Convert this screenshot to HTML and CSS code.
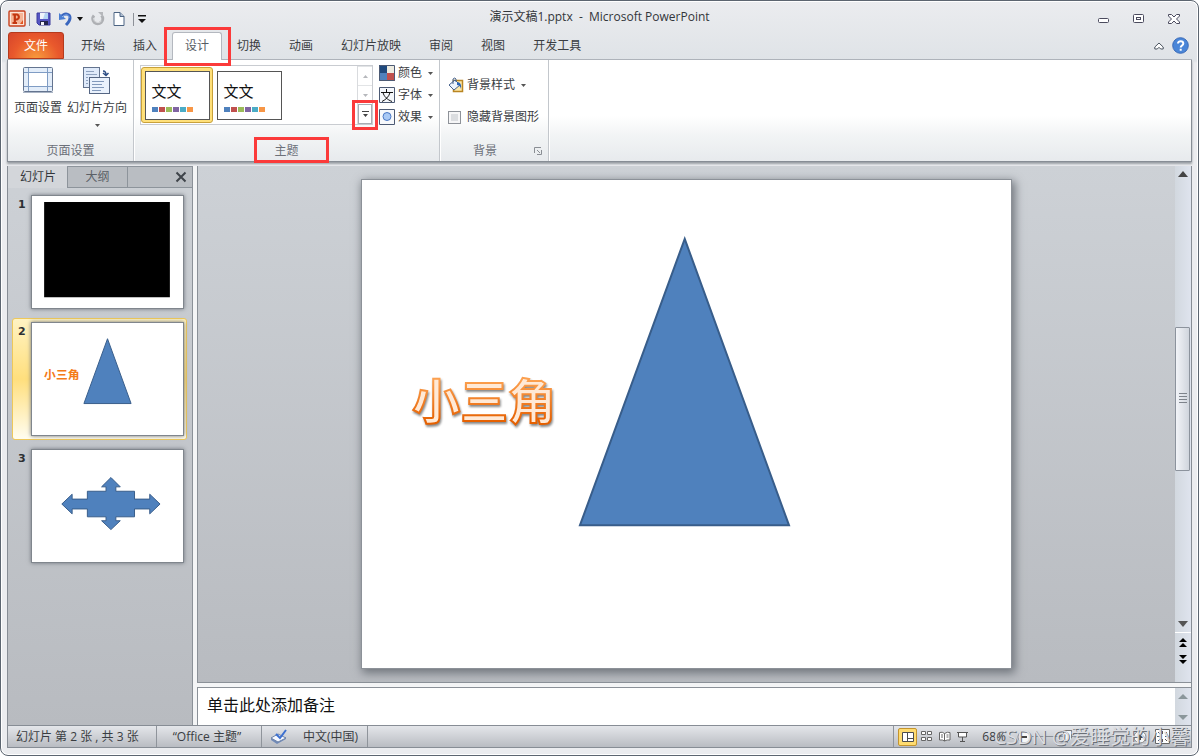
FILE: index.html
```html
<!DOCTYPE html>
<html lang="zh-CN">
<head>
<meta charset="utf-8">
<title>演示文稿1.pptx - Microsoft PowerPoint</title>
<link rel="stylesheet" href="styles.css">
</head>
<body>
<div class="window">
  <header class="titlebar">
    <div class="quick">
      <button class="ic" aria-label="PowerPoint"><svg width="18" height="18" viewBox="0 0 18 18"><rect x="1" y="1" width="16" height="15" rx="1" fill="#fbe3d6" stroke="#c8401c" stroke-width="1.4"/><path d="M3 3h12v11H3z" fill="#f6b596"/><path d="M6.800 4v9M4.500 13h4.500M4.500 4.500h4.500a2.600 2.600 0 0 1 0 5H7" fill="none" stroke="#c3360f" stroke-width="2.200"/><path d="M12 14l3-4v4z" fill="#e2551f"/></svg></button>
      <span class="sep"></span>
      <button class="ic save" aria-label="保存"><svg width="16" height="16" viewBox="0 0 16 16"><path d="M1 2h13v12H3l-2-2z" fill="#5656c4" stroke="#3a3a9c"/><path d="M4 2h8v6H4z" fill="#f0f4fc"/><path d="M9 2h3v6H7z" fill="#b5d4f2"/><path d="M4 10h8v4H4z" fill="#25264d"/><path d="M5 11h3v3H5z" fill="#f3f3f8"/></svg></button>
      <button class="ic undo" aria-label="撤消"><svg width="16" height="16" viewBox="0 0 16 16"><path d="M3 6c4-5 9-3 9 1 0 3-2 5-4 7" fill="none" stroke="#3a66be" stroke-width="3"/><path d="M1 2v7l7-1z" fill="#4b7ed2"/><path d="M4 6c3-3 7-3 7 1" fill="none" stroke="#91b8ef"/></svg></button>
      <button class="ic caret" aria-label="撤消选项"><svg width="6" height="4"><path d="M0 0h6L3 4z" fill="#111"/></svg></button>
      <button class="ic redo" aria-label="重复"><svg width="16" height="16" viewBox="0 0 16 16"><path d="M4 4.500a5 5 0 1 0 7.500 0" fill="none" stroke="#aeb0b4" stroke-width="3"/><path d="M8 1h5v5z" fill="#b5b7bb"/><path d="M3.500 7a4.500 4.500 0 0 0 8 3" fill="none" stroke="#d8d9dc"/></svg></button>
      <button class="ic new" aria-label="新建"><svg width="14" height="16" viewBox="0 0 14 16"><path d="M2 1.500h6l4 4v9H2z" fill="#fdfeff" stroke="#4c6483"/><path d="M8 1.500v4h4" fill="#aebed2" stroke="#4c6483"/></svg></button>
      <span class="sep"></span>
      <button class="ic" aria-label="自定义快速访问工具栏"><svg width="8" height="8"><path d="M0 0h8v1.500H0zM0 4h8L4 8z" fill="#111"/></svg></button>
    </div>
    <h1 class="title">演示文稿1.pptx&nbsp; -&nbsp; Microsoft PowerPoint</h1>
    <div class="winbtns">
      <button class="ic" aria-label="最小化"><svg width="12" height="12"><rect x="0.500" y="5.500" width="10" height="4" rx="1" fill="#fff" stroke="#4b4b5e"/></svg></button>
      <button class="ic" aria-label="还原"><svg width="12" height="12"><rect x="0.500" y="1.500" width="10" height="8" rx="1" fill="#fff" stroke="#4b4b5e"/><rect x="3.500" y="4.500" width="4" height="2" fill="#fff" stroke="#4b4b5e"/></svg></button>
      <button class="ic" aria-label="关闭"><svg width="12" height="12"><path d="M.5 1.500h3L6 4l2.500-2.500h3v1.500L8.500 6l3 3v1.500h-3L6 8l-2.500 2.500h-3V9l3-3-3-3z" fill="#fff" stroke="#4b4b5e"/></svg></button>
    </div>
  </header>

  <nav class="tabs">
    <button class="file">文件</button>
    <button class="tab">开始</button>
    <button class="tab">插入</button>
    <button class="tab active">设计<span class="mark mark-tab"></span></button>
    <button class="tab">切换</button>
    <button class="tab">动画</button>
    <button class="tab">幻灯片放映</button>
    <button class="tab">审阅</button>
    <button class="tab">视图</button>
    <button class="tab">开发工具</button>
    <div class="help">
      <button class="ic" aria-label="功能区最小化"><svg width="10" height="8"><path d="M5 1L.8 5v2h2.500L5 5.300 6.700 7h2.500V5z" fill="#fff" stroke="#4b5560"/></svg></button>
      <button class="ic" aria-label="帮助"><svg width="17" height="17"><circle cx="8.500" cy="8.500" r="7.800" fill="#4a86d8" stroke="#3a6bb8"/><path d="M6 6.500c0-3.200 5.300-3 5.300 0 0 2-2.600 2-2.600 4M8.700 11.800v2" fill="none" stroke="#fff" stroke-width="2"/></svg></button>
    </div>
  </nav>

  <section class="ribbon">
    <div class="group">
      <div class="tools">
        <button class="big"><svg width="32" height="32" viewBox="0 0 32 32"><rect x="1.500" y="3.500" width="29" height="24" rx="1" fill="#e3edf9" stroke="#64748f"/><path d="M7 9h18v13H7z" fill="#fff"/><path d="M2 8.500h28M2 22.500h28M6.500 4v23M25.500 4v23" stroke="#7f9cc4" fill="none"/><path d="M1 28.500h30" stroke="#a9b4c5"/></svg>页面设置</button>
        <button class="big"><svg width="32" height="32" viewBox="0 0 32 32"><rect x="2.500" y="3.500" width="16" height="20" fill="#dfeafa" stroke="#64748f"/><path d="M5 7.500h8M5 10.500h11M5 13.500h2M5 16.500h2M5 19.500h2" stroke="#8fa2bf"/><rect x="8.500" y="13.500" width="20" height="16" fill="#eaf2fd" stroke="#556683"/><path d="M11 17.500h12M11 20.500h10M11 23.500h12M11 26.500h9" stroke="#8299bb"/><path d="M22 7q3 0 3 4M22 9l3 2.500L27.500 9" fill="none" stroke="#2f4f85" stroke-width="1.500"/></svg>幻灯片方向<svg class="below" width="5" height="3"><path d="M0 0h5L2.500 3z" fill="#555"/></svg></button>
      </div>
      <div class="label">页面设置</div>
    </div>
    <div class="group">
      <div class="tools themes">
        <div class="gallery">
          <button class="theme chosen"><span class="sample"><span class="glyphs">文文</span><span class="swatches"><i class="c1"></i><i class="c2"></i><i class="c3"></i><i class="c4"></i><i class="c5"></i><i class="c6"></i></span></span></button>
          <button class="theme"><span class="sample"><span class="glyphs">文文</span><span class="swatches"><i class="c1"></i><i class="c2"></i><i class="c3"></i><i class="c4"></i><i class="c5"></i><i class="c6"></i></span></span></button>
          <div class="pager">
            <button aria-label="上一行"><svg width="5" height="3"><path d="M0 3h5L2.500 0z" fill="#b6b8bc"/></svg></button>
            <button aria-label="下一行"><svg width="5" height="3"><path d="M0 0h5L2.500 3z" fill="#b6b8bc"/></svg></button>
            <button class="more" aria-label="其他"><svg width="7" height="7"><path d="M0 0h7v1H0zM1 3h5L3.500 6z" fill="#444"/></svg><span class="mark mark-more"></span></button>
          </div>
        </div>
        <div class="rows">
          <button class="row"><svg width="16" height="16"><path d="M0 0h8v8H0z" fill="#1f497d"/><path d="M8 0h8v8H8z" fill="#eeece1"/><path d="M0 8h8v8H0z" fill="#4f81bd"/><path d="M8 8h8v8H8z" fill="#c0504d"/><path d="M.5.5h15v15H.5z" fill="none" stroke="#4c5a74"/></svg>颜色<svg class="arrow" width="5" height="3"><path d="M0 0h5L2.500 3z" fill="#555"/></svg></button>
          <button class="row"><svg width="16" height="16"><path d="M.5.5h15v15H.5z" fill="#f4f7fc" stroke="#4c5a74"/><path d="M7.500 2v3M2 5.500h12M11 5.500c-1 4-4 7-8 9M4 5.500c1 4 4 7 9 9" fill="none" stroke="#111"/></svg>字体<svg class="arrow" width="5" height="3"><path d="M0 0h5L2.500 3z" fill="#555"/></svg></button>
          <button class="row"><svg width="16" height="16"><path d="M.5.5h15v15H.5z" fill="#f7f9fc" stroke="#4c5a74"/><circle cx="8" cy="7.500" r="4" fill="#a9c9f5" stroke="#4a78c4"/></svg>效果<svg class="arrow" width="5" height="3"><path d="M0 0h5L2.500 3z" fill="#555"/></svg></button>
        </div>
      </div>
      <div class="label">主题<span class="mark mark-label"></span></div>
    </div>
    <div class="group">
      <div class="tools backs">
        <button class="row"><svg width="16" height="16" viewBox="0 0 16 16"><path d="M5.500 3.500h9v11h-9z" fill="#ffe9a8" stroke="#b98521" stroke-width="1.500"/><path d="M1 8l6-5 5 5-6 5z" fill="#eef4fc" stroke="#47628c"/><path d="M5 7V2q2-2 3 0v3" fill="none" stroke="#47628c"/><path d="M9 5q5 0 4 7-1-4-4-4z" fill="#2c65b4"/></svg>背景样式<svg class="arrow" width="5" height="3"><path d="M0 0h5L2.500 3z" fill="#555"/></svg></button>
        <label class="row check"><input type="checkbox">隐藏背景图形</label>
      </div>
      <div class="label">背景<button class="launch" aria-label="背景对话框"><svg width="8" height="8"><path d="M.5 6V.5H7M3 3l3 3M7.500 3v4.500H3" fill="none" stroke="#8a8e94"/></svg></button></div>
    </div>
  </section>

  <main class="work">
    <aside class="side">
      <div class="sidetabs"><button class="on">幻灯片</button><button>大纲</button><button class="close" aria-label="关闭窗格"><svg width="12" height="12"><path d="M1.500 1.500l9 9M10.500 1.500l-9 9" stroke="#3f444a" stroke-width="2"/></svg></button></div>
      <ol class="thumbs">
        <li><b>1</b><div class="thumb"><svg viewBox="0 0 151 114"><path d="M11 6h128v97H11z"/></svg></div></li>
        <li class="picked"><b>2</b><div class="thumb"><svg viewBox="0 0 151 114"><path d="M75.500 16L99.500 82h-48z" fill="#4f81bd" stroke="#385d8a"/><text x="11" y="57" class="mini">小三角</text></svg></div></li>
        <li><b>3</b><div class="thumb"><svg viewBox="0 0 151 114"><path d="M79 28l9.500 9.500h-4.500V42h19v8h15.500v-5L129 55l-10.500 10v-5H103v8H84v4h4.500L79 81l-9.500-9H74v-4H55v-8H39.500v5L29 55l10.500-10v5H55v-8h19v-4.500h-4.500z" fill="#4f81bd" stroke="#385d8a"/></svg></div></li>
      </ol>
    </aside>
    <section class="editor">
      <div class="stage">
        <div class="canvas">
          <svg class="slide" viewBox="0 0 650 488">
            <defs><linearGradient id="orange" x1="0" y1="0" x2="0" y2="1"><stop offset="0.250" stop-color="#fca04f"/><stop offset="0.850" stop-color="#e66000"/></linearGradient></defs>
            <path d="M323 59L427.500 346H218z" fill="#4f81bd" stroke="#385d8a" stroke-width="2"/>
            <text x="50" y="239" class="wordart" stroke="url(#orange)">小三角</text>
          </svg>
        </div>
        <div class="scroll">
          <button aria-label="向上"><svg width="10" height="6"><path d="M0 6h10L5 0z" fill="#444"/></svg></button>
          <div class="track"><div class="grip"><svg width="8" height="11"><path d="M0 .5h8M0 3.500h8M0 6.500h8M0 9.500h8" stroke="#7d838b"/></svg></div></div>
          <button aria-label="向下"><svg width="10" height="6"><path d="M0 0h10L5 6z" fill="#555"/></svg></button>
          <div class="pages">
            <button aria-label="上一张"><svg width="8" height="10"><path d="M0 4h8L4 0zM0 9h8L4 5z"/></svg></button>
            <button aria-label="下一张"><svg width="8" height="10"><path d="M0 1h8L4 5zM0 6h8l-4 4z"/></svg></button>
          </div>
        </div>
      </div>
      <div class="notes">
        <textarea aria-label="备注" placeholder="单击此处添加备注"></textarea>
        <div class="scroll">
          <button aria-label="备注向上"><svg width="10" height="5"><path d="M0 5h10L5 0z" fill="#8b979b"/></svg></button>
          <button aria-label="备注向下"><svg width="10" height="5"><path d="M0 0h10L5 5z" fill="#8b979b"/></svg></button>
        </div>
      </div>
    </section>
  </main>

  <footer class="status">
    <span class="cell">幻灯片 第 2 张 , 共 3 张</span>
    <span class="cell wide">“Office 主题”</span>
    <span class="cell lang"><svg width="18" height="16" viewBox="0 0 18 16"><path d="M1 9v2l6 4 9-5V8z" fill="#718ab8"/><path d="M1 9l7-4 8 4-8 4z" fill="#f5f8ff" stroke="#6d83a8"/><path d="M6 5l4 4 6-8" fill="none" stroke="#3b6fd0" stroke-width="2"/></svg>中文(中国)</span>
    <div class="right">
      <div class="views">
        <button class="current" aria-label="普通视图"><svg width="12" height="10"><path d="M.5.5h11v9H.5zM5.500 0v10M5.500 6.500h6" fill="#fff" stroke="#4c4c4c"/></svg></button>
        <button aria-label="幻灯片浏览"><svg width="12" height="11"><path d="M.5.500h4v3h-4zM6.500.5h4v3h-4zM.5 6.500h4v3h-4zM6.500 6.500h4v3h-4z" fill="#fff" stroke="#666"/></svg></button>
        <button aria-label="阅读视图"><svg width="12" height="11"><path d="M.5 1.500q3-1 5 1 3-2 5.500-1v7.500q-3-.5-5.500 1-2-1.500-5-1zM5.500 2.500V10M2 4h2M2 6h2M7.500 4h2M7.500 6h2" fill="#fff" stroke="#666"/></svg></button>
        <button aria-label="幻灯片放映"><svg width="12" height="11"><path d="M0 1.500h11M1.500 2v4h8V2M5.500 6v4M3 10.500h5" fill="#fff" stroke="#555"/></svg></button>
      </div>
      <button class="zoom">68%</button>
      <button class="ic" aria-label="缩小"><svg width="14" height="14"><circle cx="7" cy="7" r="6" fill="#f7f7f8" stroke="#888"/><path d="M4 7h6" stroke="#444" stroke-width="2"/></svg></button>
      <input class="slider" type="range" min="0" max="100" value="34" aria-label="显示比例">
      <button class="ic" aria-label="放大"><svg width="14" height="14"><circle cx="7" cy="7" r="6" fill="#f7f7f8" stroke="#888"/><path d="M4 7h6M7 4v6" stroke="#444" stroke-width="2"/></svg></button>
      <button class="ic fit" aria-label="适应窗口"><svg width="15" height="15"><path d="M.5.500h14v14H.5z" fill="#fff" stroke="#666"/><path d="M7.500 2v3M7.500 10v3M2 7.500h3M10 7.500h3M3 3l2 2M12 3l-2 2M3 12l2-2M12 12l-2-2" stroke="#555"/></svg></button>
      <svg class="corner" width="12" height="12"><path d="M9 0h2v2H9zM5 4h2v2H5zM9 4h2v2H9zM1 8h2v2H1zM5 8h2v2H5zM9 8h2v2H9z" fill="#a6b0c2"/></svg>
    </div>
    <span class="watermark">CSDN @爱睡觉的小馨</span>
  </footer>
</div>
</body>
</html>
```

FILE: styles.css
```css
* { box-sizing: border-box; }
html, body { height: 100%; margin: 0; }
body { background: #fff; font: 12px/16px "Open Sans", "Noto Sans CJK SC", sans-serif; color: #3a3d42; overflow: hidden; }
button { font: inherit; color: inherit; border: 0; padding: 0; background: none; display: flex; align-items: center; justify-content: center; white-space: nowrap; }
svg { display: block; flex: none; }

.window { height: 100vh; display: flex; flex-direction: column; padding: 0 6px 7px; border: 1px solid #5c6570; border-radius: 8px; background: linear-gradient(#ebecef, #dfe3e7 60px, #ebecef 62px); box-shadow: inset 0 0 0 1px #fff; }

.titlebar { height: 31px; flex: none; display: grid; grid-template-columns: 1fr auto 1fr; align-items: center; padding: 0 1px; }
.quick { display: flex; align-items: center; padding-top: 5px; }
.sep { width: 1px; height: 13px; background: #8d9198; margin: 0 6px 0 3px; }
.save { margin-right: 6px; }
.caret { margin: 0 7px 0 3px; }
.new { margin: 0 4px 0 6px; }
.new + .sep { margin-right: 4px; }
.title { margin: 0; font: inherit; color: #33363b; }
.winbtns { display: flex; justify-content: flex-end; gap: 23px; padding: 4px 11px 0 0; }

.tabs { height: 28px; flex: none; display: flex; padding: 0 1px; border-bottom: 1px solid #aeb3ba; }
.file { width: 56px; margin-right: 3px; color: #fff; border: 1px solid #b53a1c; border-radius: 3px 3px 0 0; background: radial-gradient(ellipse at 50% 110%, #f9a13e, #e9592c 60%, #d6452b); }
.tab { padding: 0 14px; }
.tab.active { position: relative; margin: 0 1px -1px; padding: 0 12px 1px; color: #565b63; background: #fff; border: 1px solid #b4b8bf; border-width: 1px 1px 0; border-radius: 3px 3px 0 0; }
.mark { position: absolute; border: 3px solid #fb3a3a; z-index: 2; pointer-events: none; }
.mark-tab { inset: -6px -10px -6px -9px; }
.help { margin-left: auto; display: flex; align-items: center; gap: 8px; padding-right: 2px; }

.ribbon { height: 102px; flex: none; display: flex; border: 1px solid #878d95; border-width: 0 1px 1px; background: linear-gradient(#fff 55%, #f2f4f5 75%, #e7eaed); margin-bottom: 4px; box-shadow: 0 2px 2px #999ea4; }
.ribbon .group { display: flex; flex-direction: column; padding: 0 6px 2px; border-right: 1px solid #c3c7cc; box-shadow: 1px 0 #fff; }
.tools { display: flex; flex: 1; align-items: flex-start; }
.label { position: relative; text-align: center; color: #6c7079; }
.mark-label { width: 75px; height: 26px; top: -6px; left: 50%; margin-left: -33px; }
.big { flex-direction: column; padding-top: 4px; margin-right: 5px; }
.big + .big { margin-right: 0; }
.big > svg:first-child { margin-bottom: 4px; }
.big > .below { margin-top: 8px; }
.themes { gap: 6px; padding-top: 5px; }
.gallery { display: flex; height: 60px; border: 1px solid #c9ccd1; background: #fff; width: 233px; }
.theme { width: 72px; height: 56px; margin-top: 1px; border: 1px solid transparent; border-radius: 3px; }
.theme.chosen { border-color: #c8a13a; background: #ffe07a; }
.sample { width: 65px; height: 49px; border: 1px solid #555; background: #fff; padding: 9px 6px 0; color: #111; text-align: left; }
.glyphs { display: block; font-size: 15px; line-height: 20px; }
.swatches { display: flex; gap: 1px; padding-top: 6px; }
.swatches i { width: 6px; height: 5px; }
.c1 { background: #4f81bd; } .c2 { background: #c0504d; } .c3 { background: #9bbb59; }
.c4 { background: #8064a2; } .c5 { background: #4bacc6; } .c6 { background: #f79646; }
.pager { width: 15px; margin-left: auto; display: flex; flex-direction: column; border-left: 1px solid #d9dbde; }
.pager button { flex: 1; border-top: 1px solid #e2e4e6; }
.pager .more { position: relative; border: 1px solid #a9adb3; }
.mark-more { inset: -5px -7px -7px; }
.rows { display: flex; flex-direction: column; margin-top: -3px; }
.rows .row { height: 22px; }
.row { display: flex; align-items: center; gap: 3px; }
.arrow { margin-left: 3px; }
.backs { flex-direction: column; padding: 17px 3px 0 2px; gap: 16px; }
.check { white-space: nowrap; gap: 6px; }
.check input { appearance: none; width: 13px; height: 13px; margin: 0; border: 1px solid #8e9299; box-shadow: inset 0 0 0 2px #f6f6f7; background: #dbdde0; }
.launch { position: absolute; right: 0; bottom: 4px; }
.group:nth-child(3) .label { padding-right: 18px; }

.work { flex: 1; min-height: 0; display: flex; background: #f4f5f6; gap: 4px; border: 1px solid #878d95; border-width: 0 1px; }
.side { width: 185px; flex: none; border-right: 1px solid #8b9198; background: linear-gradient(#cdd1d6, #b8bbc0); }
.sidetabs { display: flex; height: 22px; }
.sidetabs button { width: 60px; border: 1px solid #8d949b; border-width: 1px 0 1px 1px; background: #b9bdc2; color: #5b5f66; }
.sidetabs .on { width: 59px; border-color: transparent; background: #d3d6da; color: #33363b; }
.sidetabs .close { flex: 1; justify-content: flex-end; padding-right: 5px; }
.thumbs { list-style: none; margin: 0; padding: 3px 5px 0 4px; display: flex; flex-direction: column; gap: 5px; }
.thumbs li { display: flex; height: 122px; padding: 3px 2px; border: 1px solid transparent; border-radius: 3px; }
.thumbs .picked { border-color: #eec85a; background: linear-gradient(#fff3c3, #ffdf7d 50%, #fffdf0); }
.thumbs b { width: 16px; padding: 2px 0 0 3px; font: bold 11px/16px "DejaVu Sans", "Liberation Sans", sans-serif; color: #2c2f33; }
.thumb { flex: 1; background: #fff; border: 1px solid #80868d; box-shadow: 0 0 4px #6d727a; }
.thumb svg { width: 100%; height: 100%; }
.mini { font: bold 12px "Noto Sans CJK SC", sans-serif; fill: #f47a17; }

.editor { flex: 1; min-width: 0; display: flex; flex-direction: column; gap: 4px; }
.stage { flex: 1; min-height: 0; display: flex; border: 1px solid #8b9198; border-width: 0 0 1px 1px; background: linear-gradient(#cdd1d6, #b8bbc0); }
.canvas { flex: 1; display: flex; align-items: center; justify-content: center; min-width: 0; }
.slide { height: 94.4%; aspect-ratio: 4 / 3; background: #fff; box-shadow: 0 0 0 1px #8c9198, 2px 3px 9px 2px #6f747b; }
.wordart { font: bold 48px "Noto Sans CJK SC", sans-serif; fill: #ffe9d6; stroke-width: 2px; filter: drop-shadow(1px 2px 1px #888); }
.scroll { width: 16px; flex: none; display: flex; flex-direction: column; background: linear-gradient(90deg, #d2d8df, #dfe4ee); }
.scroll button { height: 16px; }
.track { flex: 1; display: flex; align-items: center; }
.grip { width: 15px; height: 33.33%; display: flex; align-items: center; justify-content: center; border: 1px solid #8c939d; border-radius: 1px; background: linear-gradient(90deg, #f2f4f8, #d0d5dd); }
.pages { height: 50px; padding-top: 2px; border-top: 1px solid #fff; }
.pages button { width: 16px; }
.notes { height: 38px; flex: none; display: flex; border: 1px solid #8b9198; border-width: 1px 0 0 1px; }
.notes textarea { flex: 1; border: 0; outline: 0; resize: none; padding: 7px 9px; font: 16px/20px "Open Sans", "Noto Sans CJK SC", sans-serif; overflow: hidden; }
.notes textarea::placeholder { color: #111; opacity: 1; }
.notes .scroll { justify-content: space-between; }

.status { position: relative; height: 23px; flex: none; display: flex; align-items: center; padding-left: 8px; border: 1px solid #878d95; background: linear-gradient(#e4e6ea, #b9bcc2); white-space: nowrap; }
.cell { display: flex; align-items: center; height: 100%; padding-right: 17px; margin-right: 8px; border-right: 1px solid #8f949b; }
.cell.wide { padding: 0 20px 0 8px; }
.cell.lang { gap: 15px; padding-right: 9px; }
.right { margin-left: auto; height: 100%; display: flex; align-items: center; border-left: 1px solid #8f949b; padding: 0 1px 0 4px; }
.views { display: flex; }
.views button { width: 18px; height: 18px; }
.views .current { width: 19px; border: 1px solid #c4942e; border-radius: 2px; background: #ffdc70; margin-right: 1px; }
.zoom { margin: 0 11px 0 10px; }
.slider { appearance: none; width: 100px; height: 14px; margin: 0 1px; background: linear-gradient(#8a8f96, #8a8f96) center / 100% 1px no-repeat; }
.slider::-webkit-slider-thumb { appearance: none; width: 9px; height: 13px; background: #f5f6f8; border: 1px solid #777; clip-path: polygon(0 0, 100% 0, 100% 60%, 50% 100%, 0 60%); }
.fit { margin: 0 8px; }
.corner { align-self: flex-end; }
.watermark { position: absolute; right: 1px; bottom: -4px; font-size: 20px; line-height: 28px; color: #dcdee2; text-shadow: 1px 1px #6a6f76; pointer-events: none; }
```
